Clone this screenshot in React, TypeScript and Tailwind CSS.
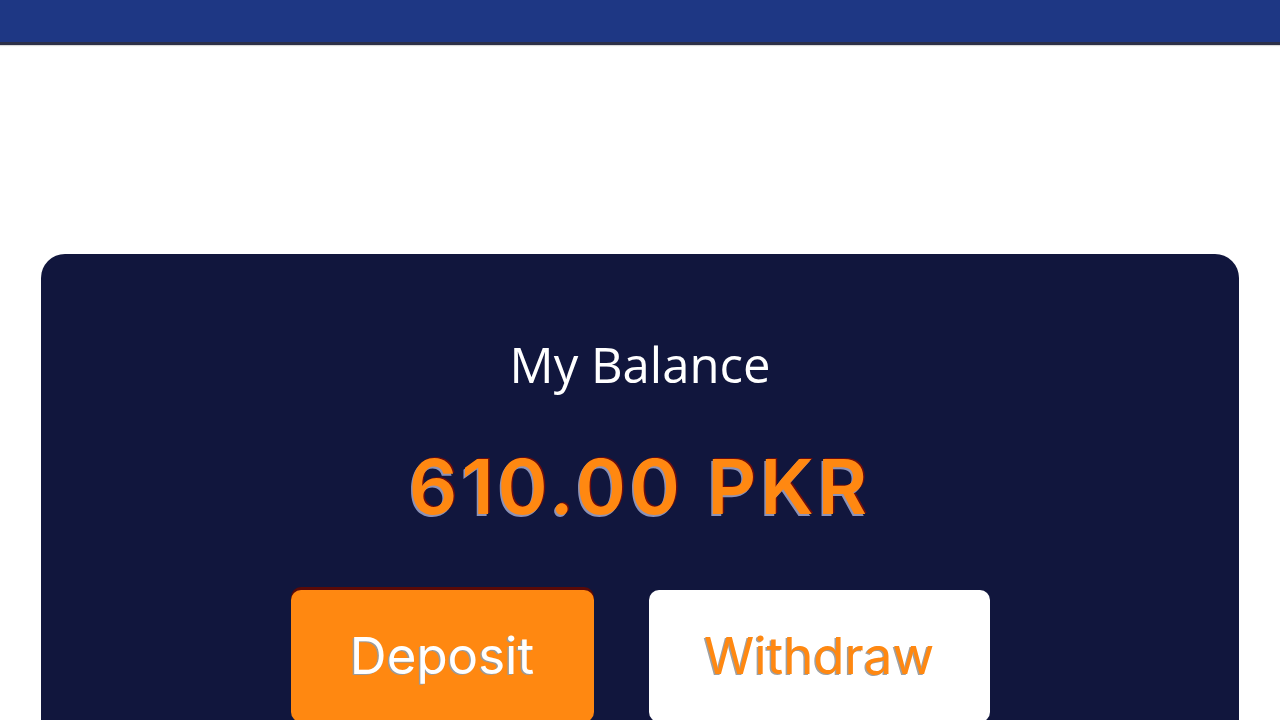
export default function App() {
  return (
    <div className="h-screen bg-white overflow-hidden" style={{ fontFamily: '"Open Sans", sans-serif' }}>
      <header className="h-[45px] bg-[#1e3784] border-b-[3px] border-[#2c3048] shadow-[0_1px_1px_rgba(0,0,0,0.15)]" />
      <main className="px-[41px] pt-[209px]">
        <section className="rounded-[24px] bg-[#11163d] pt-[80px] pb-[40px] flex flex-col items-center">
          <h2 className="text-white text-[49px] leading-[60px] font-normal">My Balance</h2>
          <div
            className="mt-[47px] text-[#ff8811] text-[76px] leading-[90px] font-semibold tracking-[4px] [text-shadow:-1.5px_1.5px_0_#8c92b8,1.5px_-1.5px_0_#6e0c0c]"
            style={{ fontFamily: 'Inter, sans-serif' }}
          >
            610.00 PKR
          </div>
          <div className="mt-[59px] flex gap-[55px]" style={{ fontFamily: 'Inter, sans-serif' }}>
            <button className="w-[303px] h-[132px] rounded-[10px] bg-[#ff8811] shadow-[0_-3px_0_#5a0a08] text-white text-[51px] [text-shadow:-1.5px_1px_0_#9a9a9a]">
              Deposit
            </button>
            <button className="w-[341px] h-[132px] rounded-[10px] bg-white text-[#ff8811] text-[51px] [text-shadow:-1.5px_1px_0_#a0a0a0]">
              Withdraw
            </button>
          </div>
        </section>
      </main>
    </div>
  );
}
